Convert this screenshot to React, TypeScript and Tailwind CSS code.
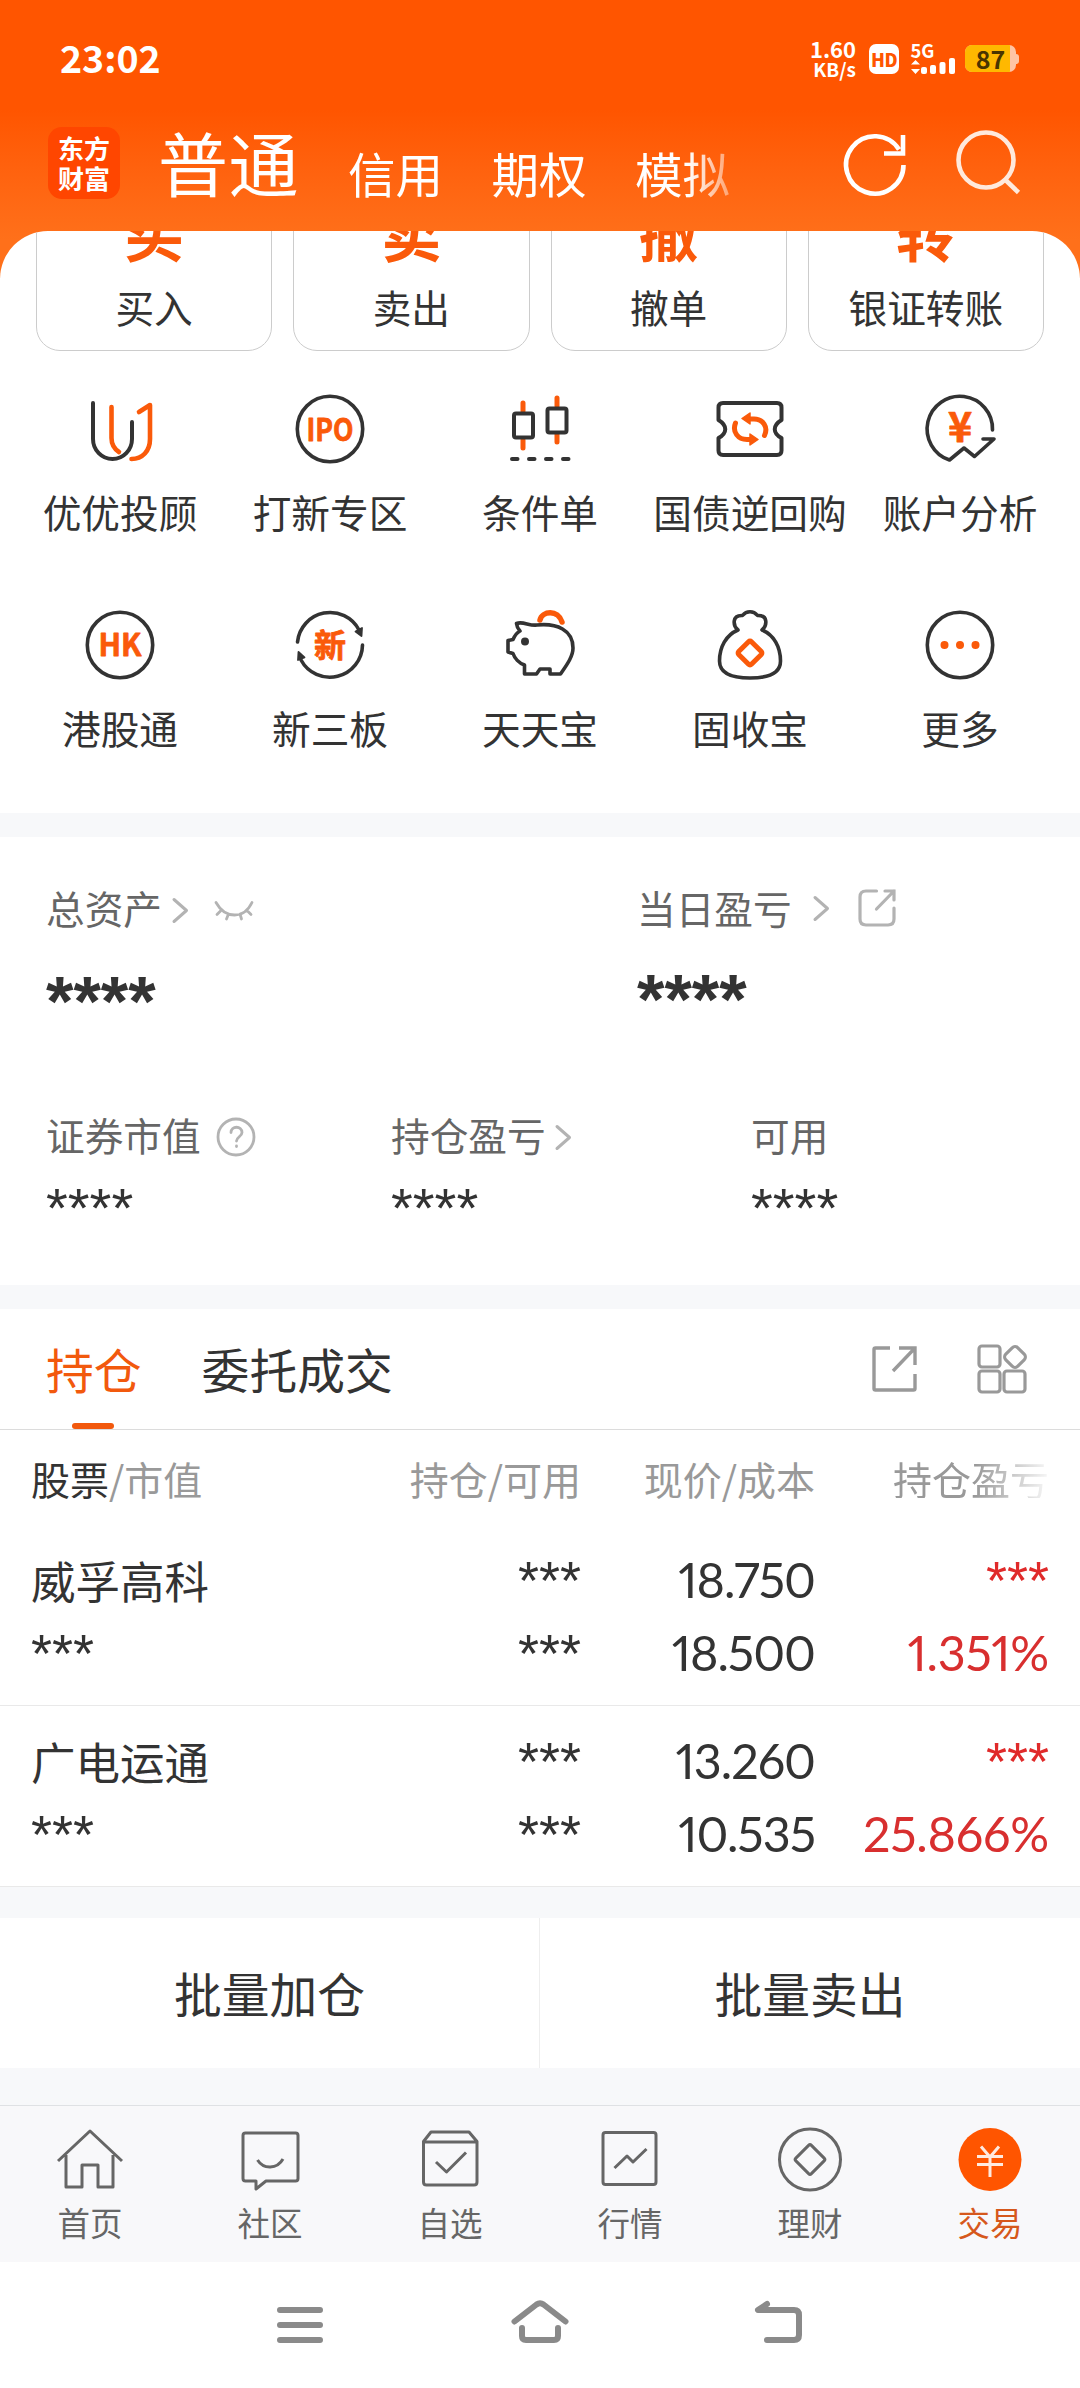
import type { ReactNode } from "react";
import clsx from "clsx";

interface Shortcut {
  label: string;
  icon: ReactNode;
}

interface Holding {
  name: string;
  price: string;
  cost: string;
  percent: string;
}

const DARK = "#333333";
const ORANGE = "#fa5a0a";

const TRADE_CARDS = [
  { glyph: "买", label: "买入" },
  { glyph: "卖", label: "卖出" },
  { glyph: "撤", label: "撤单" },
  { glyph: "转", label: "银证转账" },
];

const HOLDINGS: Holding[] = [
  { name: "威孚高科", price: "18.750", cost: "18.500", percent: "1.351%" },
  { name: "广电运通", price: "13.260", cost: "10.535", percent: "25.866%" },
];

/** 72px canvas shared by all the shortcut icons. */
function ShortcutIcon({ children }: { children: ReactNode }) {
  return (
    <svg
      width="72"
      height="72"
      viewBox="0 0 72 72"
      fill="none"
      stroke={DARK}
      strokeWidth="3.6"
      strokeLinecap="round"
      strokeLinejoin="round"
      className="overflow-visible"
    >
      {children}
    </svg>
  );
}

function IconText({ children, size, y, width }: { children: string; size: number; y: number; width?: number }) {
  return (
    <text
      x="36"
      y={y}
      textAnchor="middle"
      fontSize={size}
      fontWeight="700"
      fill={ORANGE}
      stroke={ORANGE}
      strokeWidth="0.8"
      textLength={width}
      lengthAdjust="spacingAndGlyphs"
    >
      {children}
    </text>
  );
}

const SHORTCUTS: Shortcut[] = [
  {
    label: "优优投顾",
    icon: (
      <ShortcutIcon>
        <path d="M9 10v36a19.5 20 0 0 0 39 0V29" strokeWidth="4" />
        <path d="M27.5 14v31q0 9 7.5 14M47.5 66c11 0 18.5-8 18.5-20V12L55 19" stroke={ORANGE} strokeWidth="4.6" />
      </ShortcutIcon>
    ),
  },
  {
    label: "打新专区",
    icon: (
      <ShortcutIcon>
        <circle cx="36" cy="36" r="32.7" />
        <IconText size={31} y={47.5} width={47}>IPO</IconText>
      </ShortcutIcon>
    ),
  },
  {
    label: "条件单",
    icon: (
      <ShortcutIcon>
        <path d="M19 10v8M19 47v8M53 5v8M53 41v8" stroke={ORANGE} strokeWidth="5" />
        <rect x="10" y="20.5" width="19" height="24" rx="2" strokeWidth="4" />
        <rect x="43.5" y="15.5" width="19" height="24" rx="2" strokeWidth="4" />
        <path d="M8 66h5.5M25 66h5.5M42 66h5.5M59 66h5.5" strokeWidth="4" />
      </ShortcutIcon>
    ),
  },
  {
    label: "国债逆回购",
    icon: (
      <ShortcutIcon>
        <path d="M9 10h54q4.5 0 4.5 4.5V27c-9 5.5-9 13 0 18v12.5q0 4.5-4.5 4.5H9q-4.5 0-4.5-4.5V45c9-5 9-12.5 0-18V14.5Q4.5 10 9 10Z" strokeWidth="4" />
        <path d="M35 26h5c9 0 14.5 8 10.5 16.5M21.5 30C18 39 24 46.5 33 46.5h4" stroke={ORANGE} strokeWidth="5" />
        <path d="M28 25.5 36 20v11ZM44 46.5 36 41v11Z" fill={ORANGE} stroke={ORANGE} strokeWidth="1.5" />
      </ShortcutIcon>
    ),
  },
  {
    label: "账户分析",
    icon: (
      <ShortcutIcon>
        <path d="M68.5 37A32.7 32.7 0 1 0 25.5 67L40 55l10.5 8.5L70 46H59" />
        <IconText size={41} y={49}>¥</IconText>
      </ShortcutIcon>
    ),
  },
  {
    label: "港股通",
    icon: (
      <ShortcutIcon>
        <circle cx="36" cy="36" r="32.7" />
        <IconText size={31} y={47} width={43}>HK</IconText>
      </ShortcutIcon>
    ),
  },
  {
    label: "新三板",
    icon: (
      <ShortcutIcon>
        <path d="M3.5 33A32.7 32.7 0 0 1 65 21M68.5 36A32.7 32.7 0 0 1 7 51" />
        <path d="m67.5 27-6-4.5 6.5-3.5ZM4.5 43l6 5.500-6.500 2.500Z" fill={DARK} strokeWidth="1.8" />
        <IconText size={32} y={47.5}>新</IconText>
      </ShortcutIcon>
    ),
  },
  {
    label: "天天宝",
    icon: (
      <ShortcutIcon>
        <path d="M12.5 14.5C19 12 25 17 33 16c20-2 36 5 36 23 0 9-7 18-12.5 26H46v-5H36l-3.5 5H20.5V56C15 54 10.5 49 9 44.5L4 43V31.5l5-1C11 26 13 23.5 16 22q-3-3-3.5-7.5Z" />
        <circle cx="21" cy="32.5" r="2.2" fill={DARK} />
        <path d="M36 11C38 2 54 0 58 13" stroke={ORANGE} strokeWidth="5.5" />
      </ShortcutIcon>
    ),
  },
  {
    label: "固收宝",
    icon: (
      <ShortcutIcon>
        <path d="M24 21c-5-4-6.5-15 4.5-14.5 4-5 11-5 15 0C54.5 6 53 17 48 21c12 5 18.5 17 18.5 31 0 12-12 17-30.5 17S5.5 64 5.5 52C5.5 38 12 26 24 21Z" />
        <rect x="27" y="35" width="18" height="18" rx="2" transform="rotate(45 36 44)" stroke={ORANGE} strokeWidth="5" />
      </ShortcutIcon>
    ),
  },
  {
    label: "更多",
    icon: (
      <ShortcutIcon>
        <circle cx="36" cy="36" r="32.7" />
        <path d="M20.5 36h.01M36 36h.01M51.5 36h.01" stroke={ORANGE} strokeWidth="8" />
      </ShortcutIcon>
    ),
  },
];

function StatusBar() {
  return (
    <div className="flex h-[112px] items-center justify-between pt-[5px] pr-[61px] pl-[60px] text-white">
      <span className="-mt-[3px] text-[37.5px] leading-none font-bold">23:02</span>
      <div className="flex items-center">
        <div className="mr-[13px] flex w-[48px] flex-col items-end font-bold">
          <span className="text-[22px] leading-[19px]">1.60</span>
          <span className="text-[19px] leading-[21px]">KB/s</span>
        </div>
        <div className="mr-[11px] flex h-[30px] w-[30px] items-center justify-center rounded-[7px] bg-white text-[18px] leading-[20px] font-black tracking-[-0.5px] text-[#ff5500]">
          HD
        </div>
        <svg width="46" height="32" viewBox="0 0 46 32" className="mr-[9px] overflow-visible" fill="#fff">
          <text x="0.5" y="14.5" fontSize="19" fontWeight="700" textLength="24" lengthAdjust="spacingAndGlyphs">5G</text>
          <path d="M1 21.5 5.5 17l4.5 4.5ZM1 26h9l-4.5 5Z" />
          <rect x="11" y="24" width="6" height="7" rx="2" />
          <rect x="20" y="22" width="6" height="9" rx="2" />
          <rect x="29.5" y="19" width="6" height="12" rx="2" />
          <rect x="39" y="15" width="6" height="16" rx="2" />
        </svg>
        <div className="flex items-center">
          <div className="flex h-[27px] w-[51px] items-center overflow-hidden rounded-[7px] bg-[#ffc3a3]">
            <div className="flex h-full w-[45px] items-center justify-center bg-[#ffb800] pl-[6px] text-[25px] leading-[27px] font-bold text-[#4a3500]">87</div>
          </div>
          <div className="h-[10px] w-[3px] rounded-r-[3px] bg-[#ffc3a3]" />
        </div>
      </div>
    </div>
  );
}

function AccountTabs() {
  return (
    <div className="flex h-[118px] items-start pl-[48px] text-white">
      <div className="mt-[15px] grid h-[72px] w-[72px] place-content-center rounded-[14px] bg-[#ff4600] text-center text-[26px] leading-[30px] font-bold">
        <div>东方</div>
        <div>财富</div>
      </div>
      <div className="ml-[38px] flex w-[622px] items-end overflow-hidden whitespace-nowrap [mask-image:linear-gradient(to_right,#000_530px,transparent_600px)]">
        <span className="text-[70px] leading-[100px] tracking-[0.5px]">普通</span>
        <span className="ml-[49px] pb-[6px] text-[47.5px] leading-[66px]">信用</span>
        <span className="ml-[48.5px] pb-[6px] text-[47.5px] leading-[66px]">期权</span>
        <span className="ml-[48.5px] pb-[6px] text-[47.5px] leading-[66px]">模拟</span>
      </div>
      <svg width="64" height="64" viewBox="0 0 64 64" fill="none" stroke="#fff" strokeWidth="4.6" className="mt-[20px] ml-[63px] overflow-visible">
        <path d="M60.5 33A28.7 28.7 0 1 1 56 17.5M60 3v18.5H41" />
      </svg>
      <svg width="64" height="64" viewBox="0 0 64 64" fill="none" stroke="#ffe9dc" strokeWidth="4.6" className="mt-[20px] ml-[49px] overflow-visible">
        <circle cx="30" cy="28" r="27.5" />
        <path d="M49 47.5 62.5 60.5" />
      </svg>
    </div>
  );
}

function ChevronIcon({ className }: { className?: string }) {
  return (
    <svg width="18" height="28" viewBox="0 0 18 28" fill="none" stroke="#b3b3b3" strokeWidth="3" strokeLinecap="round" strokeLinejoin="round" className={className}>
      <path d="M3 3.5 15.5 14.5 3 25.5" />
    </svg>
  );
}

function AssetLabel({ children }: { children: ReactNode }) {
  return <div className="flex h-[40px] items-center text-[38.7px] leading-[40px] text-[#666]">{children}</div>;
}

/** Masked amount. Liberation Sans has the wide, straight-armed asterisk. */
function Masked({ stars, className }: { stars: string; className: string }) {
  return <div className={clsx("font-['Liberation_Sans',sans-serif]", className)}>{stars}</div>;
}

function AssetSummary() {
  return (
    <section className="h-[448px] bg-white pt-[50px] pl-[46px]">
      <div className="flex h-[227px]">
        <div className="w-[591px]">
          <AssetLabel>
            总资产
            <ChevronIcon className="mt-[5px] ml-[9px]" />
            <svg width="40" height="24" viewBox="0 0 40 24" fill="none" stroke="#b3b3b3" strokeWidth="2.8" strokeLinecap="round" className="mt-[5px] ml-[25px]">
              <path d="M2 4.5Q9 17 20.5 17T38 4.5M7 12.5l-4 4M14.5 16l-2 5M26 16l1.5 5M33 12.5l4 4" />
            </svg>
          </AssetLabel>
          <Masked stars="****" className="mt-[45px] text-[70.5px] leading-[60px] font-bold" />
        </div>
        <div>
          <AssetLabel>
            当日盈亏
            <ChevronIcon className="mt-[2px] ml-[20px]" />
            <svg width="40" height="40" viewBox="0 0 40 40" fill="none" stroke="#b3b3b3" strokeWidth="3.2" strokeLinecap="round" className="mt-px ml-[27px]">
              <path d="M19.5 3H9Q3 3 3 9v22q0 6 6 6h22q6 0 6-6V20M28 3h9v9M37 3 19.5 21" />
            </svg>
          </AssetLabel>
          <Masked stars="****" className="mt-[43px] text-[70.5px] leading-[60px] font-bold" />
        </div>
      </div>
      <div className="flex">
        <div className="w-[345px]">
          <AssetLabel>
            证券市值
            <svg width="40" height="40" viewBox="0 0 40 40" fill="none" stroke="#b3b3b3" strokeWidth="2.8" strokeLinecap="round" className="mt-[5px] ml-[15px]">
              <circle cx="20" cy="20" r="18" />
              <path d="M15 15.5c0-7 11-7 11 0 0 4-5.5 4.5-5.5 8.5M20.5 29v.5" />
            </svg>
          </AssetLabel>
          <Masked stars="****" className="mt-[30px] text-[56px] leading-[47px]" />
        </div>
        <div className="w-[360px]">
          <AssetLabel>
            持仓盈亏
            <ChevronIcon className="mt-[5px] ml-[8px]" />
          </AssetLabel>
          <Masked stars="****" className="mt-[30px] text-[56px] leading-[47px]" />
        </div>
        <div>
          <AssetLabel>可用</AssetLabel>
          <Masked stars="****" className="mt-[30px] text-[56px] leading-[47px]" />
        </div>
      </div>
    </section>
  );
}

function HoldingRow({ holding }: { holding: Holding }) {
  return (
    <div className="grid h-[181px] grid-cols-[376px_174px_234px_234px] grid-rows-[73px_73px] border-b border-[#e9e9e9] pt-[18px] pl-[31px] text-[44.5px] leading-[73px] whitespace-nowrap">
      <div>{holding.name}</div>
      <Masked stars="***" className="text-right text-[54px] leading-[75px]" />
      <div className="text-right font-['Lato',sans-serif] text-[48.5px] tracking-[-1px] proportional-nums">{holding.price}</div>
      <Masked stars="***" className="text-right text-[54px] leading-[75px] text-[#e02a2a]" />
      <Masked stars="***" className="text-[54px] leading-[75px]" />
      <Masked stars="***" className="text-right text-[54px] leading-[75px]" />
      <div className="text-right font-['Lato',sans-serif] text-[48.5px] tracking-[-1px] proportional-nums">{holding.cost}</div>
      <div className="text-right font-['Lato',sans-serif] text-[48.5px] tracking-[-0.2px] text-[#d82f2f] proportional-nums">{holding.percent}</div>
    </div>
  );
}

function Holdings() {
  return (
    <section className="bg-white">
      <div className="relative flex h-[121px] items-center border-b border-[#dcdcdc] pl-[46px] text-[47.8px] leading-none">
        <span className="text-[#f2590d]">持仓</span>
        <span className="ml-[60px]">委托成交</span>
        <svg width="48" height="48" viewBox="0 0 48 48" fill="none" stroke="#999" strokeWidth="3.4" className="ml-[478px]">
          <path d="M19 3H4.5Q3 3 3 4.5v39Q3 45 4.5 45h38q1.5 0 1.5-1.5V29M28 3h16v17M44 3 22 26" />
        </svg>
        <svg width="50" height="50" viewBox="0 0 50 50" fill="none" stroke="#999" strokeWidth="3.2" className="ml-[58px]">
          <rect x="2" y="2" width="21" height="21" rx="3" />
          <rect x="2" y="27" width="21" height="21" rx="3" />
          <rect x="27" y="27" width="21" height="21" rx="3" />
          <rect x="29.5" y="4.5" width="17" height="17" rx="4" transform="rotate(45 38 13)" />
        </svg>
        <div className="absolute bottom-0 left-[72px] h-[6px] w-[42px] rounded-full bg-[#f2590d]" />
      </div>
      <div className="grid h-[95px] grid-cols-[376px_174px_234px_234px] items-center pt-[2px] pl-[31px] text-[39px] leading-none text-[#999]">
        <div>
          <span className="text-[#333]">股票</span>/市值
        </div>
        <div className="text-right">持仓/可用</div>
        <div className="text-right">现价/成本</div>
        <div className="text-right [mask-image:linear-gradient(to_right,#000_160px,transparent_240px)]">持仓盈亏</div>
      </div>
      {HOLDINGS.map((holding) => (
        <HoldingRow key={holding.name} holding={holding} />
      ))}
    </section>
  );
}

const NAV_ITEMS: Shortcut[] = [
  {
    label: "首页",
    icon: <path d="M1 33 33 3 65 33M9 27v32h16V37h16v22h15V27" />,
  },
  {
    label: "社区",
    icon: <path d="M8.5 5h50q2.5 0 2.5 2.5v43q0 2.5-2.5 2.5H29l-10 8v-8H8.5Q6 53 6 50.5v-43Q6 5 8.5 5ZM20.5 32c6 9.5 19.5 9.5 25.5-1" />,
  },
  {
    label: "自选",
    icon: <path d="M6.5 13.5 14 4h38l8 9.5V54q0 3-3 3H9.5q-3 0-3-3ZM6.5 14H60M19 34l10.5 10L49 24.5" />,
  },
  {
    label: "行情",
    icon: <path d="M8.5 4.5h48q2.5 0 2.5 2.5v47q0 2.5-2.5 2.5h-48Q6 56.5 6 54V7q0-2.5 2.5-2.5ZM17.5 40 30 28l6 6 13.5-13" />,
  },
  {
    label: "理财",
    icon: (
      <>
        <circle cx="33" cy="31.5" r="30.5" />
        <rect x="22" y="20.5" width="22" height="22" rx="2" transform="rotate(45 33 31.5)" />
      </>
    ),
  },
  {
    label: "交易",
    icon: (
      <>
        <circle cx="33" cy="31.5" r="31.5" fill="#ff5500" stroke="none" />
        <path d="M24 18.5 33 29l9-10.5M20 28.5h26M20 36.5h26M33 29v20" stroke="#ffeadf" strokeLinecap="butt" />
      </>
    ),
  },
];

function BottomNav() {
  return (
    <nav className="grid h-[157px] grid-cols-6 border-t border-[#dfe1e4] bg-[#f8f8fa] pt-[22px]">
      {NAV_ITEMS.map((item) => (
        <div key={item.label} className="flex flex-col items-center">
          <svg width="66" height="63" viewBox="0 0 66 63" fill="none" stroke="#666" strokeWidth="3" strokeLinejoin="round" className="overflow-visible">
            {item.icon}
          </svg>
          <span className={clsx("mt-[13px] text-[32.5px] leading-[36px]", item.label === "交易" ? "text-[#d6581c]" : "text-[#666]")}>
            {item.label}
          </span>
        </div>
      ))}
    </nav>
  );
}

function SystemNav() {
  return (
    <div className="flex h-[126px] items-center justify-center gap-[180px] bg-white">
      {[
        <path key="menu" d="M10 13h40M10 28h40M10 43h40" />,
        <path key="home" d="M4.5 24.5 26.5 7.5Q30 5 33.5 7.5L55.5 24.5M12 31v8q0 4 4 4h28q4 0 4-4v-8" />,
        <path key="back" d="M17 7 8 13h36q5 0 5 5v20q0 5-5 5H17" />,
      ].map((icon, i) => (
        <svg key={i} width="60" height="56" viewBox="0 0 60 56" fill="none" stroke="#8a8a8a" strokeWidth="6" strokeLinecap="round" strokeLinejoin="round">
          {icon}
        </svg>
      ))}
    </div>
  );
}

export default function App() {
  return (
    <div className="flex h-[2388px] w-[1080px] flex-col overflow-hidden bg-[#f7f8fa] font-['Noto_Sans_CJK_SC',sans-serif] text-[#333]">
      <header className="h-[278px] shrink-0 bg-linear-to-b from-[#ff5500] from-[110px] to-[#ff701a] to-[240px]">
        <StatusBar />
        <AccountTabs />
      </header>

      <section className="z-10 -mt-[47px] h-[582px] shrink-0 overflow-hidden rounded-t-[48px] bg-white">
        <div className="grid h-[120px] grid-cols-4 gap-[21px] px-[36px]">
          {TRADE_CARDS.map((card) => (
            <div key={card.label} className="-mt-[60px] flex h-[180px] flex-col items-center rounded-[24px] border border-[#ccc]">
              <span className="mt-[28px] text-[60px] leading-[62px] font-bold text-[#fa5a0a]">{card.glyph}</span>
              <span className="mt-[24px] text-[38.7px] leading-[40px]">{card.label}</span>
            </div>
          ))}
        </div>
        <div className="mt-[42px] grid grid-cols-5 px-[15px]">
          {SHORTCUTS.map((item) => (
            <div key={item.label} className="flex h-[216px] flex-col items-center whitespace-nowrap">
              {item.icon}
              <span className="mt-[26px] text-[38.7px] leading-[40px]">{item.label}</span>
            </div>
          ))}
        </div>
      </section>

      <div className="h-[24px] shrink-0" />
      <AssetSummary />
      <div className="h-[24px] shrink-0" />
      <Holdings />

      <div className="mt-[31px] grid h-[150px] grid-cols-2 bg-white text-center text-[47.8px] leading-[150px]">
        <div className="border-r border-[#eee]">批量加仓</div>
        <div>批量卖出</div>
      </div>
      <div className="h-[37px]" />
      <BottomNav />
      <SystemNav />
    </div>
  );
}
